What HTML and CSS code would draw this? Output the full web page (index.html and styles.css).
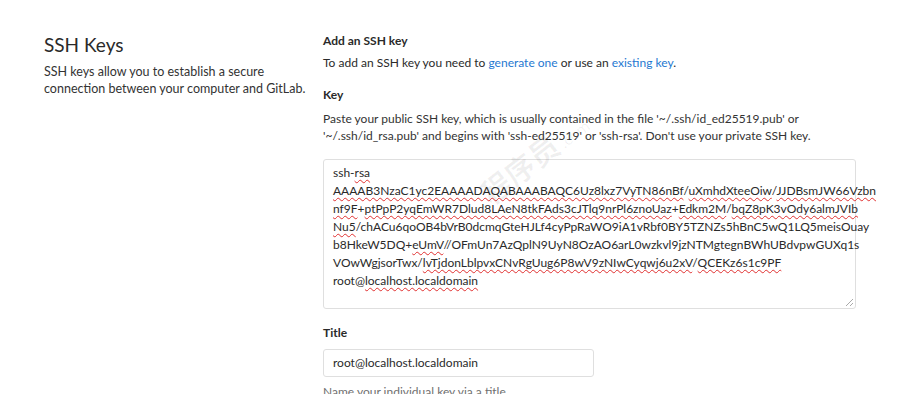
FILE: index.html
```html
<!DOCTYPE html>
<html lang="en">

<head>
    <meta charset="UTF-8">
    <title>SSH Keys</title>
    <link rel="stylesheet" href="styles.css">
</head>

<body>
    <div class="page">
        <div class="sidebar">
            <h2>SSH Keys</h2>
            <p>SSH keys allow you to establish a secure<br>connection between your computer and GitLab.</p>
        </div>

        <div class="main">
            <h4>Add an SSH key</h4>
            <p class="intro">To add an SSH key you need to <a href="#">generate one</a> or use an <a href="#">existing key</a>.</p>

            <label class="label">Key</label>
            <p class="hint">Paste your public SSH key, which is usually contained in the file '~/.ssh/id_ed25519.pub' or<br>'~/.ssh/id_rsa.pub' and begins with 'ssh-ed25519' or 'ssh-rsa'. Don't use your private SSH key.</p>

            <div class="key-box">
                <div class="key-text">ssh-<span class="sp">rsa</span><br><span class="sp">AAAAB3NzaC1yc2EAAAADAQABAAABAQC6Uz8lxz7VyTN86nBf</span>/<span class="sp">uXmhdXteeOiw</span>/<span class="sp">JJDBsmJW66Vzbn</span><br><span class="sp">nf9F</span>+<span class="sp">ptPpP2yqEmWR7Dlud8LAeN8tkFAds3cJTlq9nrPl6znoUaz</span>+<span class="sp">Edkm2M</span>/<span class="sp">bqZ8pK3vOdy6almJVIb</span><br><span class="sp">Nu5</span>/chACu6qoOB4bVrB0dcmqGteHJLf4cyPpRaWO9iA1vRbf0BY5TZNZs5hBnC5wQ1LQ5meisOuay<br>b8HkeW5DQ+<span class="sp">eUmV</span>//OFmUn7AzQplN9UyN8OzAO6arL0wzkvl9jzNTMgtegnBWhUBdvpwGUXq1s<br>VOwWgjsorTwx/<span class="sp">lvTjdonLblpvxCNvRgUug6P8wV9zNIwCyqwj6u2xV</span>/<span class="sp">QCEKz6s1c9PF</span><br>root@<span class="sp">localhost.localdomain</span></div>
                <span class="grip"></span>
            </div>

            <label class="label title-label">Title</label>
            <div class="input">root@localhost.localdomain</div>
            <p class="help">Name your individual key via a title</p>
        </div>
    </div>

    <!-- faint site watermark over the form -->
    <div class="watermark">
        <span class="wm-cn">程序员</span>
        <span class="wm-url">.com</span>
    </div>
</body>

</html>
```

FILE: styles.css
```css
body {
    margin: 0;
    font-family: Lato, Arial, sans-serif;
    font-size: 12px;
    color: #2a2a2a;
    background: #fff;
    overflow: hidden;
}

.page {
    display: flex;
    padding: 32px 0 0 44px;
}

.sidebar {
    width: 279px;
}

.sidebar h2 {
    margin: 0 0 5px;
    font-size: 19px;
    line-height: 26px;
    font-weight: 400;
    color: #2a2a2a;
}

.sidebar p {
    margin: 0;
    font-size: 12.5px;
    line-height: 17px;
    color: #333;
}

.main {
    width: 533px;
}

.main h4 {
    margin: 0 0 4px;
    font-size: 12px;
    line-height: 18px;
    font-weight: 700;
}

.main p {
    margin: 0;
    line-height: 17px;
}

.main .intro {
    line-height: 18px;
    margin-bottom: 14px;
}

a {
    color: #1f78d1;
    text-decoration: none;
}

.label {
    display: block;
    font-weight: 700;
    line-height: 18px;
    margin-bottom: 6px;
}

.main .hint {
    color: #333;
    margin-bottom: 15px;
}

.key-box {
    position: relative;
    height: 150px;
    border: 1px solid #dfdfdf;
    border-radius: 3px;
    box-sizing: border-box;
    padding: 4px 9px;
    margin-bottom: 15px;
}

.key-text {
    line-height: 18px;
    white-space: nowrap;
}

.sp {
    text-decoration: underline wavy #e03030;
    text-decoration-thickness: 1px;
    text-underline-offset: 2px;
}

.grip {
    position: absolute;
    right: 2px;
    bottom: 2px;
    width: 7px;
    height: 7px;
    background: linear-gradient(135deg, transparent 45%, #aaa 45%, #aaa 55%, transparent 55%, transparent 75%, #aaa 75%, #aaa 85%, transparent 85%);
}

.title-label {
    margin-bottom: 7px;
}

.input {
    width: 271px;
    height: 28px;
    box-sizing: border-box;
    border: 1px solid #dfdfdf;
    border-radius: 3px;
    padding: 4px 9px;
    line-height: 18px;
}

.main .help {
    margin-top: 6px;
    color: #707070;
}

.watermark {
    position: absolute;
    left: 470px;
    top: 135px;
    transform: rotate(-38deg);
    pointer-events: none;
    color: rgba(0, 0, 0, 0.06);
    white-space: nowrap;
}

.wm-cn {
    font-family: "Noto Sans CJK SC", sans-serif;
    font-size: 30px;
    font-weight: 700;
}

.wm-url {
    font-family: Lato, sans-serif;
    font-size: 16px;
}
```
